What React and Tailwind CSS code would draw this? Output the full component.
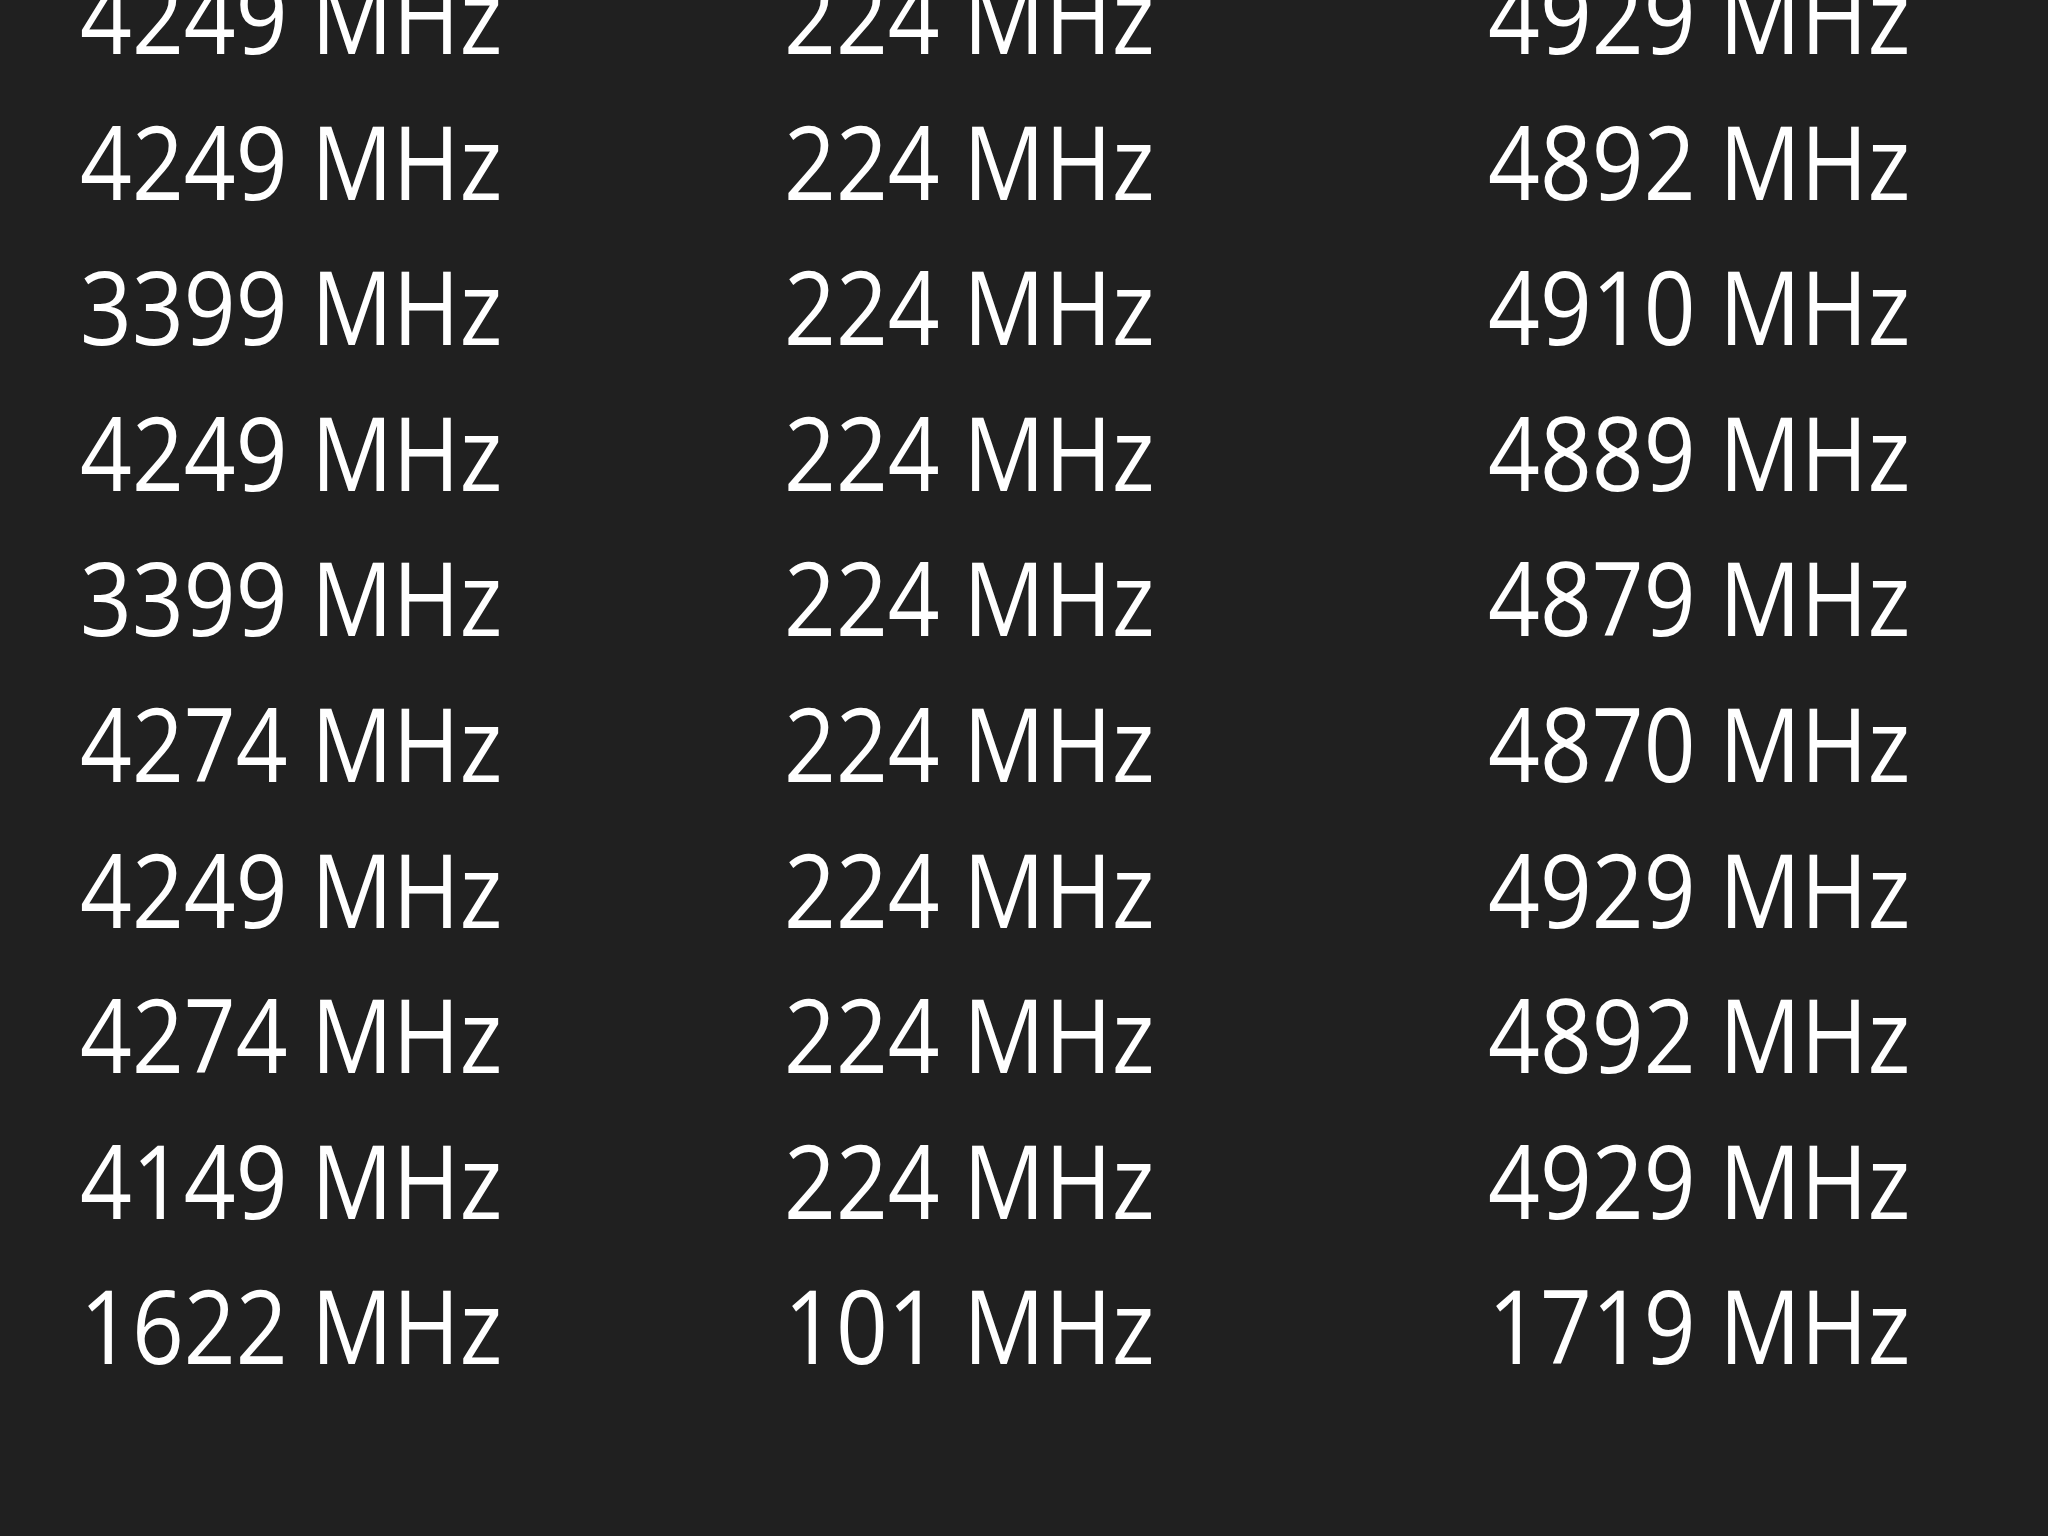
import React from "react";

const rows = [
  ["4249", "224", "4929"],
  ["4249", "224", "4892"],
  ["3399", "224", "4910"],
  ["4249", "224", "4889"],
  ["3399", "224", "4879"],
  ["4274", "224", "4870"],
  ["4249", "224", "4929"],
  ["4274", "224", "4892"],
  ["4149", "224", "4929"],
  ["1622", "101", "1719"],
];

function Cell({ value }) {
  return (
    <div className="h-[145.6px] leading-[145.6px] whitespace-nowrap">
      <span className="inline-block origin-left scale-x-[0.89]">
        {value} MHz
      </span>
    </div>
  );
}

export default function App() {
  return (
    <div className="h-[1536px] w-[2048px] overflow-hidden bg-[#202020] font-['Open_Sans',sans-serif] text-[102px] font-medium text-white">
      <div className="-mt-[58px] pl-[80px]">
        {rows.map((row, i) => (
          <div key={i} className="grid grid-cols-[704px_704px_1fr]">
            {row.map((v, j) => (
              <Cell key={j} value={v} />
            ))}
          </div>
        ))}
      </div>
    </div>
  );
}
